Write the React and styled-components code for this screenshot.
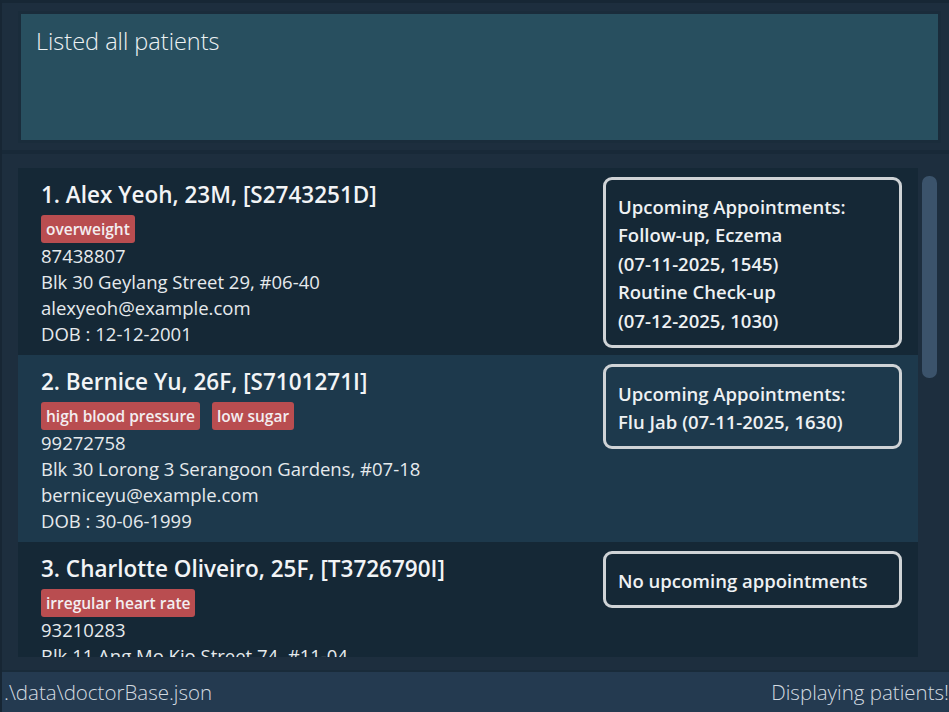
import React from "react";
import styled, { createGlobalStyle } from "styled-components";

const GlobalStyle = createGlobalStyle`
  html, body {
    margin: 0;
    padding: 0;
    background: #1d2e3e;
  }
`;

const Window = styled.div`
  display: flex;
  flex-direction: column;
  width: 949px;
  height: 712px;
  box-sizing: border-box;
  overflow: hidden;
  background: #1d2e3e;
  border-top: 3px solid #172735;
  border-left: 2px solid #172634;
  font-family: "Open Sans", "Noto Sans", sans-serif;
  color: #e8ecef;
`;

const ResultPane = styled.div`
  padding: 8px 8px 7px 16px;
  border-bottom: 4px solid #182938;
`;

const ResultBox = styled.div`
  height: 100px;
  border: 3px solid #1a2c3b;
  background: #284f5f;
  padding: 13px 15px;
  font-size: 23.5px;
  font-weight: 300;
  line-height: 28px;
  color: #eef2f4;
`;

const ListPane = styled.div`
  display: flex;
  flex: 1;
  min-height: 0;
  padding: 14px 0 13px 16px;
  border-bottom: 2px solid #192b3a;
`;

const List = styled.div`
  width: 900px;
  overflow: hidden;
`;

const ScrollTrack = styled.div`
  width: 15px;
  margin-left: 4px;
  padding-top: 8px;
`;

const ScrollThumb = styled.div`
  height: 202px;
  border-radius: 7px;
  background: #3b536b;
`;

const Card = styled.div`
  display: flex;
  align-items: flex-start;
  justify-content: space-between;
  padding: 0 16px 0 23px;
  background: ${({ alt }) => (alt ? "#1d394c" : "#152836")};
`;

const Info = styled.div`
  display: flex;
  flex-direction: column;
  padding: 14px 0 8px;
  white-space: nowrap;
`;

const Name = styled.div`
  font-size: 22.5px;
  font-weight: 600;
  line-height: 26px;
  color: #f2f4f6;
`;

const Tags = styled.div`
  display: flex;
  gap: 12px;
  margin: 7px 0 0;
`;

const Tag = styled.span`
  height: 28px;
  padding: 0 5px;
  border-radius: 3px;
  background: #b94d50;
  font-size: 15.5px;
  font-weight: 600;
  line-height: 28px;
  color: #f3eef0;
`;

const Line = styled.div`
  font-size: 18.5px;
  line-height: 26px;
  color: #e6eaed;
`;

const Appointments = styled.div`
  flex-shrink: 0;
  width: 269px;
  margin-top: 8.5px;
  padding: 13px 12px 9.5px;
  border: 3px solid #cfd3d6;
  border-radius: 9px;
  font-size: 18.5px;
  font-weight: 600;
  line-height: 28.5px;
  color: #eef1f3;
  white-space: nowrap;
`;

const StatusBar = styled.div`
  display: flex;
  justify-content: space-between;
  align-items: center;
  flex-shrink: 0;
  height: 40px;
  padding: 0 0 0 2px;
  background: #243a50;
  font-size: 20.5px;
  font-weight: 300;
  line-height: 40px;
  color: #d3dae0;
  white-space: nowrap;
`;

const patients = [
  {
    name: "1. Alex Yeoh, 23M, [S2743251D]",
    tags: ["overweight"],
    phone: "87438807",
    address: "Blk 30 Geylang Street 29, #06-40",
    email: "alexyeoh@example.com",
    dob: "12-12-2001",
    appointments: [
      "Follow-up, Eczema",
      "(07-11-2025, 1545)",
      "Routine Check-up",
      "(07-12-2025, 1030)",
    ],
  },
  {
    name: "2. Bernice Yu, 26F, [S7101271I]",
    tags: ["high blood pressure", "low sugar"],
    phone: "99272758",
    address: "Blk 30 Lorong 3 Serangoon Gardens, #07-18",
    email: "berniceyu@example.com",
    dob: "30-06-1999",
    appointments: ["Flu Jab (07-11-2025, 1630)"],
  },
  {
    name: "3. Charlotte Oliveiro, 25F, [T3726790I]",
    tags: ["irregular heart rate"],
    phone: "93210283",
    address: "Blk 11 Ang Mo Kio Street 74, #11-04",
    email: "charlotte@example.com",
    dob: "13-03-2000",
    appointments: [],
  },
];

const App = () => {
  return (
    <>
      <GlobalStyle />
      <Window>
        <ResultPane>
          <ResultBox>Listed all patients</ResultBox>
        </ResultPane>
        <ListPane>
          <List>
            {patients.map((p, i) => (
              <Card key={p.name} alt={i % 2 === 1}>
                <Info>
                  <Name>{p.name}</Name>
                  <Tags>
                    {p.tags.map((t) => (
                      <Tag key={t}>{t}</Tag>
                    ))}
                  </Tags>
                  <Line>{p.phone}</Line>
                  <Line>{p.address}</Line>
                  <Line>{p.email}</Line>
                  <Line>DOB : {p.dob}</Line>
                </Info>
                <Appointments>
                  {p.appointments.length === 0 ? (
                    <div>No upcoming appointments</div>
                  ) : (
                    <>
                      <div>Upcoming Appointments:</div>
                      {p.appointments.map((a) => (
                        <div key={a}>{a}</div>
                      ))}
                    </>
                  )}
                </Appointments>
              </Card>
            ))}
          </List>
          <ScrollTrack>
            <ScrollThumb />
          </ScrollTrack>
        </ListPane>
        <StatusBar>
          <span>.\data\doctorBase.json</span>
          <span>Displaying patients!</span>
        </StatusBar>
      </Window>
    </>
  );
};

export default App;
